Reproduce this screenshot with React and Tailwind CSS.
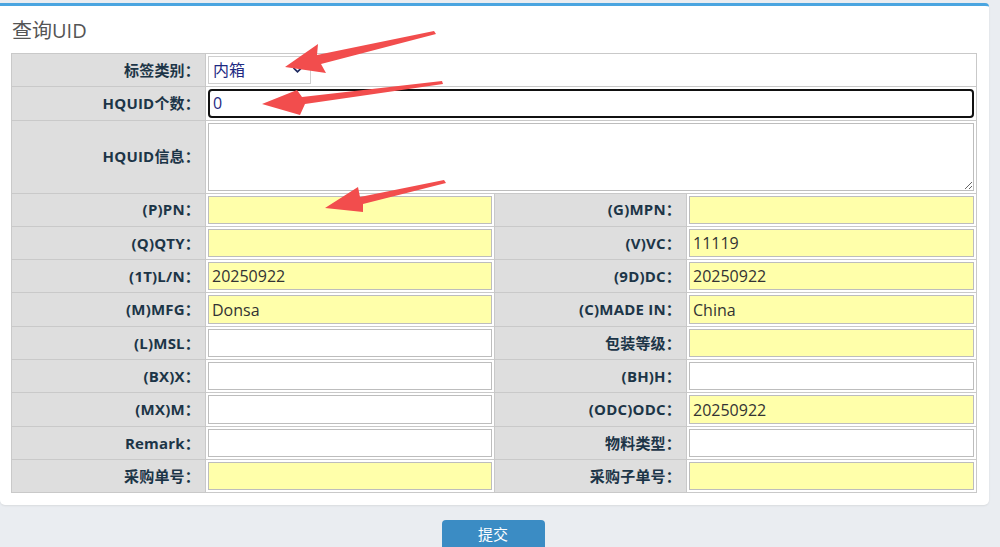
import React from 'react';

const font = { fontFamily: '"Open Sans", "Noto Sans CJK SC", sans-serif' };

const rows = [
  [{ label: '(P)PN：', value: '', yellow: true }, { label: '(G)MPN：', value: '', yellow: true }],
  [{ label: '(Q)QTY：', value: '', yellow: true }, { label: '(V)VC：', value: '11119', yellow: true }],
  [{ label: '(1T)L/N：', value: '20250922', yellow: true }, { label: '(9D)DC：', value: '20250922', yellow: true }],
  [{ label: '(M)MFG：', value: 'Donsa', yellow: true }, { label: '(C)MADE IN：', value: 'China', yellow: true }],
  [{ label: '(L)MSL：', value: '', yellow: false }, { label: '包装等级：', value: '', yellow: true }],
  [{ label: '(BX)X：', value: '', yellow: false }, { label: '(BH)H：', value: '', yellow: false }],
  [{ label: '(MX)M：', value: '', yellow: false }, { label: '(ODC)ODC：', value: '20250922', yellow: true }],
  [{ label: 'Remark：', value: '', yellow: false }, { label: '物料类型：', value: '', yellow: false }],
  [{ label: '采购单号：', value: '', yellow: true }, { label: '采购子单号：', value: '', yellow: true }],
];

const Label = ({ children }) => (
  <td className="border border-[#c9c9c9] bg-[#dedede] pr-[5px] text-right align-middle text-[15px] font-bold tracking-[0.2px] text-[#1c3547]">
    {children}
  </td>
);

const Field = ({ value, yellow }) => (
  <td className="border border-[#c9c9c9] bg-white px-[2px] py-[2px]">
    <input
      readOnly
      value={value}
      className={`block h-[28.3px] w-full border border-[#bdbdbd] px-[3px] text-[16px] text-[#333] outline-none ${yellow ? 'bg-[#ffffaa]' : 'bg-white'}`}
      style={font}
    />
  </td>
);

const Arrow = ({ points }) => <polygon points={points} fill="#f24d4d" />;

export default function App() {
  return (
    <div className="relative h-[547px] w-[1000px] overflow-hidden bg-[#eaedf1]" style={font}>
      <div className="pt-[3px] pr-[11px]">
        <div className="rounded-b-[5px] rounded-tr-[4px] border-t-[3px] border-[#4aa5e0] bg-white px-[11px] pb-[12px] shadow-[0_1px_2px_rgba(0,0,0,0.08)]">
          <h3 className="pt-[12px] pb-[9px] pl-[1px] text-[20px] leading-[26px] font-normal text-[#555]">查询UID</h3>
          <table className="w-[965px] table-fixed border-collapse border border-[#c4c4c4]">
            <colgroup>
              <col className="w-[194px]" />
              <col className="w-[289px]" />
              <col className="w-[192px]" />
              <col className="w-[290px]" />
            </colgroup>
            <tbody>
              <tr>
                <Label>标签类别：</Label>
                <td colSpan={3} className="border border-[#c9c9c9] bg-white px-[2px] py-[2px]">
                  <div className="flex h-[28.3px] w-[103px] items-center justify-between border border-[#cfcfcf] bg-white pr-[7px] pl-[4px] text-[16px] text-[#1e2a82]">
                    <span>内箱</span>
                    <svg width="11" height="8" viewBox="0 0 11 8">
                      <path d="M1.5 1.8 L5.5 5.8 L9.5 1.8" fill="none" stroke="#1e2a60" strokeWidth="1.8" />
                    </svg>
                  </div>
                </td>
              </tr>
              <tr>
                <Label>HQUID个数：</Label>
                <td colSpan={3} className="border border-[#c9c9c9] bg-white px-[2px] py-[2px]">
                  <input
                    readOnly
                    value="0"
                    className="block h-[28.3px] w-full rounded-[4px] border-2 border-[#111] px-[3px] text-[16px] text-[#1e2a82] outline-none"
                    style={font}
                  />
                </td>
              </tr>
              <tr>
                <Label>HQUID信息：</Label>
                <td colSpan={3} className="border border-[#c9c9c9] bg-white px-[2px] py-[2px]">
                  <textarea
                    readOnly
                    className="block h-[68px] w-full resize border border-[#bdbdbd] bg-white outline-none"
                  />
                </td>
              </tr>
              {rows.map((r, i) => (
                <tr key={i}>
                  <Label>{r[0].label}</Label>
                  <Field value={r[0].value} yellow={r[0].yellow} />
                  <Label>{r[1].label}</Label>
                  <Field value={r[1].value} yellow={r[1].yellow} />
                </tr>
              ))}
            </tbody>
          </table>
        </div>
      </div>
      <div className="flex justify-center pt-[15px] pr-[14px]">
        <button className="h-[34px] w-[103px] rounded-[4px] bg-[#3b8cc4] pb-[6px] text-[15px] text-white" style={font}>
          提交
        </button>
      </div>

      <svg className="pointer-events-none absolute top-0 left-0" width="1000" height="547">
        <Arrow points="285,67 318,44 317,55 434,31 436,34 321,64 326,73" />
        <Arrow points="262,104 297,90 302,97 442,81 443,84 305,104 300,115" />
        <Arrow points="325,208 358,187 360,197 444,180 446,183 363,204 363,212" />
      </svg>
    </div>
  );
}
